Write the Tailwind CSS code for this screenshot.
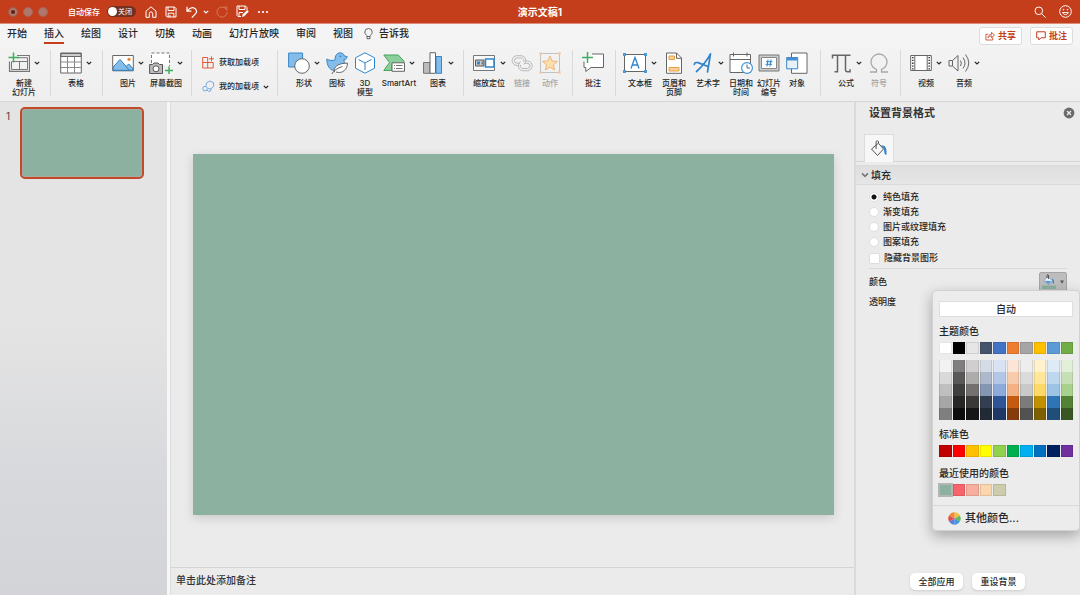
<!DOCTYPE html>
<html lang="zh-CN">
<head>
<meta charset="utf-8">
<title>演示文稿1</title>
<script src="https://cdn.jsdelivr.net/npm/@tailwindcss/browser@4"></script>
</head>
<body class="flex min-h-screen flex-col bg-[#ebebeb] font-['Inter','Noto_Sans_CJK_SC',sans-serif] text-[#262626]">

<svg class="hidden" aria-hidden="true">
  <symbol id="chev" viewBox="0 0 6 6"><path d="M.8 1.800l2.200 2.200 2.200-2.200" fill="none" stroke="currentColor" stroke-width="1.200"/></symbol>
</svg>

<!-- Title bar -->
<header class="grid h-6 shrink-0 grid-cols-[1fr_auto_1fr] items-center border-b border-[#dd8d79] bg-[#c43e1c] text-white">
  <div class="flex items-center pl-2">
    <div class="flex gap-[5px]">
      <button aria-label="关闭" class="flex size-[10px] items-center justify-center rounded-full border border-[#9b5f50] bg-[#b0766a]"><span class="size-1 rounded-full bg-[#5a2315]"></span></button>
      <button aria-label="最小化" class="size-[10px] rounded-full border border-[#a5675a] bg-[#b0766a]"></button>
      <button aria-label="缩放" class="size-[10px] rounded-full border border-[#a5675a] bg-[#b0766a]"></button>
    </div>
    <label for="autosave" class="ml-5 text-[8px] leading-3 font-medium">自动保存</label>
    <span class="relative ml-[7px] flex h-[11px] w-[29px] items-center justify-end rounded-full bg-[#73301f] pr-[4px] text-[7px] leading-none">
      <input id="autosave" type="checkbox" role="switch" class="absolute top-[1px] left-[1px] size-[9px] appearance-none rounded-full bg-white">关闭
    </span>
    <div class="ml-[9px] flex items-center">
      <button aria-label="主页"><svg class="size-3" viewBox="0 0 12 12" fill="none" stroke="#fff"><path d="M1 5.200L6 .8l5 4.400v6.100H7.700V7.600a1.700 1.700 0 0 0-3.400 0v3.700H1z" stroke-linejoin="round"/></svg></button>
      <button aria-label="保存" class="ml-2"><svg class="size-3" viewBox="0 0 12 12" fill="none" stroke="#fff"><path d="M1 1h8.500L11 2.500V11H2.200L1 9.800zM3 1v3.500h6V1M3.200 11V7.200h5.600V11M5 9v2"/></svg></button>
      <button aria-label="撤消" class="ml-[9px]"><svg class="size-3" viewBox="0 0 12 12" fill="none" stroke="#fff" stroke-width="1.200"><path d="M1 .8v4.400h4.400M1.200 5C3.500 2 6.200 1 8.600 2.300c2.100 1.200 2.500 3.700 1 5.400L5.800 11.600"/></svg></button>
      <button aria-label="撤消选项" class="ml-[5px]"><svg class="size-[6px]"><use href="#chev"/></svg></button>
      <button aria-label="重做" class="ml-[7px]"><svg class="size-3" viewBox="0 0 12 12" fill="none" stroke="#dc7c65"><path d="M8 1.500A5 5 0 1 0 11 6M7.500 1.200l3.400-.2v3.400" stroke-width=".9"/><path d="M10.600 4A5 5 0 0 0 8 1.500"/></svg></button>
      <button aria-label="另存为" class="ml-2"><svg class="size-[13px]" viewBox="0 0 13 13" fill="none" stroke="#fff"><path d="M5 11.500H2L1 10.500V1h8.500L11 2.500V5M3 1v3.500h6V1M3 11.500V7.500h4"/><path d="M6 12l.6-2.400 4.600-4.600 1.600 1.600-4.600 4.600z" fill="#fff" stroke="none"/></svg></button>
      <button aria-label="更多" class="ml-2"><svg class="h-3 w-3" viewBox="0 0 12 12" fill="#fff"><circle cx="2" cy="6" r="1.100"/><circle cx="6" cy="6" r="1.100"/><circle cx="10" cy="6" r="1.100"/></svg></button>
    </div>
  </div>
  <h1 class="text-[10px] leading-4 font-bold">演示文稿1</h1>
  <div class="flex items-center justify-end gap-[13px] pr-2">
    <button aria-label="搜索"><svg class="size-3" viewBox="0 0 12 12" fill="none" stroke="#fff"><circle cx="4.800" cy="4.800" r="3.800"/><path d="M7.600 7.600l4 4"/></svg></button>
    <button aria-label="反馈"><svg class="size-[13px]" viewBox="0 0 13 13" fill="none" stroke="#fff"><circle cx="6.500" cy="6.500" r="5.800"/><path d="M3.500 7.500a3.200 3.200 0 0 0 6 0z" stroke-width=".9"/><circle cx="4.500" cy="4.700" r=".4"/><circle cx="8.500" cy="4.700" r=".4"/></svg></button>
  </div>
</header>

<!-- Ribbon tabs -->
<nav class="flex h-[22px] shrink-0 items-start justify-between bg-[#f4f4f4] pr-[7px] pl-[7px]">
  <div class="flex gap-[17px] text-[10px] leading-[15px] font-medium [&>button]:border-b-2 [&>button]:border-transparent [&>button]:pt-[2px] [&>button]:pb-[1px] [&>button[aria-current]]:border-[#c43e1c]">
    <button>开始</button>
    <button aria-current="page">插入</button>
    <button>绘图</button>
    <button>设计</button>
    <button>切换</button>
    <button>动画</button>
    <button>幻灯片放映</button>
    <button>审阅</button>
    <button>视图</button>
    <button class="-ml-[6px] flex items-center gap-[6px]"><svg class="h-3 w-[9px]" viewBox="0 0 9 12" fill="none" stroke="#555" stroke-width=".9"><path d="M3 8.500C3 7 .8 6.300 .8 4.200a3.700 3.700 0 0 1 7.400 0C8.200 6.300 6 7 6 8.500zM3 8.500v2.200h3V8.500"/></svg>告诉我</button>
  </div>
  <div class="flex gap-2 pt-[3px] text-[9px] leading-[16px] font-bold text-[#c43e1c]">
    <button class="flex items-center gap-[3px] rounded-[3px] border border-[#dcdcdc] bg-white px-[5px]"><svg class="h-[10px] w-[10px]" viewBox="0 0 11 10" fill="none" stroke="#c43e1c" stroke-width=".9"><path d="M3.500 3H1v6.400h7.500V6.500M3.300 7C3.500 4.500 5 3.300 7.200 3.200V1l3.200 3-3.200 2.800V4.900C5.500 4.800 4.300 5.500 3.300 7z"/></svg>共享</button>
    <button class="flex items-center gap-[3px] rounded-[3px] border border-[#dcdcdc] bg-white px-[5px]"><svg class="h-[10px] w-[10px]" viewBox="0 0 10 10" fill="none" stroke="#c43e1c"><path d="M.7 .8h8.600v6H5L2.800 9V6.800H.7z"/></svg>批注</button>
  </div>
</nav>

<!-- Ribbon commands -->
<section aria-label="插入" class="flex h-14 shrink-0 items-start border-b border-[#d6d6d6] bg-linear-to-b from-[#f3f3f3] to-[#eeeeee] pt-1 text-[8px] leading-[9px] font-medium [&_.g]:flex [&_.g]:h-[46px] [&_.g]:shrink-0 [&_.g]:items-start [&_.g]:gap-[6px] [&_.g:not(:last-child)]:border-r [&_.g]:border-[#d9d9d9] [&_.g]:pt-[2px] [&_.g>button]:flex [&_.g>button]:shrink-0 [&_.g>button]:flex-col [&_.g>button]:items-center [&_.g>button]:gap-[5px] [&_.g>button]:whitespace-nowrap [&_.i]:flex [&_.i]:items-center [&_.i]:gap-1">
  <div class="g w-[51px] pl-2">
    <button class="w-8"><span class="i"><svg class="size-[22px]" viewBox="0 0 22 22" fill="none" stroke="#777"><path d="M9 3.500h12.500v15.800H1.500V9.500" stroke-width="1.200"/><path d="M9 5.700h10.500M3.500 10v7.500h16V5.700M3.500 9.500h16M11.500 9.500v8" fill="none"/><path d="M5.500 .5v10M.5 5.500h10.500" stroke="#3fae5f" stroke-width="1.500"/></svg><svg class="size-[6px]"><use href="#chev"/></svg></span><span>新建<br>幻灯片</span></button>
  </div>
  <div class="g w-[52px] pl-[9px]">
    <button class="w-8"><span class="i"><svg class="size-[22px]" viewBox="0 0 22 22" fill="none" stroke="#666"><path d="M.7 1h20.600v20H.7z" fill="#fff"/><path d="M1 1.500h20v3H1z" fill="#ccc"/><path d="M1 10h20M1 15.500h20M7.500 4.500V21M14.500 4.500V21" stroke="#888"/></svg><svg class="size-[6px]"><use href="#chev"/></svg></span>表格</button>
  </div>
  <div class="g w-[89px] pl-[9px]">
    <button class="w-8"><span class="i"><svg class="size-[22px]" viewBox="0 0 22 22"><path d="M.7 3.500h20.600v15.300H.7z" fill="#fff" stroke="#666"/><path d="M1.200 15L8 7.500l6.200 7 2.500-2.600 4 4.400v2H1.200z" fill="#84bdea" stroke="#2e7fc2"/><path d="M14 14.500l3.500 3.800" stroke="#2e7fc2"/><circle cx="17" cy="7.300" r="1.600" fill="#ed8733"/></svg><svg class="size-[6px]"><use href="#chev"/></svg></span>图片</button>
    <button class="w-8"><span class="i"><svg class="h-[22px] w-6" viewBox="0 0 24 22" fill="none"><path d="M2.500 11V1h18v13" stroke="#777" stroke-dasharray="3 2" fill="#fff"/><path d="M.6 12.500h3L5 11h4l1.500 1.500h3v9H.6z" fill="#bbb" stroke="#555"/><circle cx="7" cy="16.800" r="3" fill="#fff" stroke="#555"/><path d="M20 14.500v8M16 18.500h8" stroke="#3fae5f" stroke-width="1.500"/></svg><svg class="size-[6px]"><use href="#chev"/></svg></span>屏幕截图</button>
  </div>
  <div class="flex h-[46px] w-[86px] shrink-0 flex-col justify-between border-r border-[#d9d9d9] pt-[6px] pb-[3px] pl-[10px]">
    <button class="flex items-center gap-1"><svg class="size-[13px]" viewBox="0 0 13 13" fill="none" stroke="#e2593b"><path d="M.7 1.500h5v5h-5zM.7 6.500h5v5.500h-5zM5.700 6.500h5.500V12H5.700M9.500 .3v5M7 2.800h5"/></svg>获取加载项</button>
    <button class="flex items-center gap-1"><svg class="size-[13px]" viewBox="0 0 13 13" fill="none" stroke="#77a9dc"><path d="M3.800 5.800L4.800 2.600 8 1l3.400 1.700.4 3.600L9 8.800H6"/><circle cx="3" cy="8.600" r="2.300"/><path d="M5 10l1.500 1.500 2-.5.500-2"/></svg>我的加载项<svg class="size-[6px]"><use href="#chev"/></svg></button>
  </div>
  <div class="g w-[186px] pl-[10px]">
    <button class="w-8"><span class="i"><svg class="size-[22px]" viewBox="0 0 22 22"><path d="M.6 1h14v14H.6z" fill="#84bdea" stroke="#3a87c8"/><circle cx="14" cy="14" r="7.300" fill="#fff" stroke="#666"/></svg><svg class="size-[6px]"><use href="#chev"/></svg></span>形状</button>
    <button class="w-[22px]"><svg class="size-[22px]" viewBox="0 0 22 22"><path d="M.8 7c2.700 1.800 5.700 1.800 8.400 .8C8.800 3.800 11 .8 14.200 .8c2.500 0 3.900 1.500 4.100 3.300l2.900 .4c-.2 2-1.500 3.100-3.300 3.200C19.500 13 16.500 18.500 11 18.500H8C3.300 18 .8 13 .8 7z" fill="#84bdea" stroke="#3a87c8"/><circle cx="14.500" cy="4.200" r=".8" fill="#2e6fae"/><path d="M8.500 20.200c-1.500-5.200 3.500-9.200 13-9-.2 6.500-5 10.800-11.500 8.800" fill="#fff" stroke="#666"/><path d="M5.500 22.500c2-4 6-6.500 11-8" fill="none" stroke="#666"/></svg>图标</button>
    <button class="w-[22px]"><svg class="size-[22px]" viewBox="0 0 22 22" fill="#fff" stroke="#2f85cc" stroke-linejoin="round"><path d="M11 .8l9.500 5v10.400l-9.500 5-9.500-5V5.800z"/><path d="M4.500 7.500L11 11l6.500-3.500M11 11v7" fill="none"/></svg><span>3D<br>模型</span></button>
    <button class="w-[34px]"><span class="i"><svg class="size-[22px]" viewBox="0 0 22 22"><path d="M.8 3h14.500l6 6.500-2.800 3H9v6H.8L6.500 10.500z" fill="#8bcf9b" stroke="#43a45c"/><path d="M9 10.800h12.500v8.500H9z" fill="#fff" stroke="#666"/><path d="M11 13.500h1M13 13.500h6.500M11 16.500h1M13 16.500h6.500" stroke="#777"/></svg><svg class="size-[6px]"><use href="#chev"/></svg></span>SmartArt</button>
    <button class="w-8"><span class="i"><svg class="size-[22px]" viewBox="0 0 22 22"><path d="M1.500 10.500H8v10.800H1.500z" fill="#bbb" stroke="#777"/><path d="M14 4.500h5.500v16.800H14z" fill="#84bdea" stroke="#3a87c8"/><path d="M8 .7h5.500v20.600H8z" fill="#fff" stroke="#666"/></svg><svg class="size-[6px]"><use href="#chev"/></svg></span>图表</button>
  </div>
  <div class="g w-[109px] pl-[9px]">
    <button class="w-8"><span class="i"><svg class="h-[22px] w-6" viewBox="0 0 24 22"><path d="M1.500 3.500h21v15h-21z" fill="#f8f8f8" stroke="#777"/><path d="M3.500 8h8.500v6H3.500z" fill="#ccc" stroke="#555"/><path d="M5 9.500h3v3H5z" fill="#3a87c8"/><path d="M9.500 9.500h2v3h-2z" fill="#777"/><path d="M13.500 7h8.500v8h-8.500z" fill="#fff" stroke="#2f85cc" stroke-width="1.500"/></svg><svg class="size-[6px]"><use href="#chev"/></svg></span>缩放定位</button>
    <button disabled class="w-[22px] text-[#a5a5a5]"><svg class="size-[22px]" viewBox="0 0 22 22" fill="none" stroke="#b9b9b9"><path d="M8.200 13.500H6A4.900 4.900 0 0 1 6 3.700h4.200a4.900 4.900 0 0 1 4.700 5M13.600 9H16.300a4.900 4.900 0 0 1 0 9.800H12a4.900 4.900 0 0 1-4.700-5"/><path d="M9 11.200H6a2.600 2.600 0 0 1 0-5.200h4.200a2.600 2.600 0 0 1 2.400 3.600M13 11.300h3.300a2.600 2.600 0 0 1 0 5.200H12a2.600 2.600 0 0 1-2.400-3.600"/><path d="M14.900 8.700q0 2.500-2.300 3.900M7.300 13.800q0-2.700 2.300-4.300" stroke-width=".8"/></svg>链接</button>
    <button disabled class="w-[22px] text-[#a5a5a5]"><svg class="size-[22px]" viewBox="0 0 22 22"><path d="M1.500 1.500h19v19h-19z" fill="none" stroke="#c2c2c2"/><path d="M11 4l2.200 5 5.300.4-4.100 3.400 1.300 5.200L11 15.200 6.300 18l1.300-5.200L3.500 9.400 8.800 9z" fill="#fadfae" stroke="#efb678"/><path d="M.3 .3h2.500v2.500H.3zM19.200 .3h2.500v2.500h-2.500zM.3 19.200h2.500v2.500H.3zM19.200 19.200h2.500v2.500h-2.500z" fill="#f6c9a2"/></svg>动作</button>
  </div>
  <div class="g w-[43px] pl-[9px]">
    <button class="w-[22px]"><svg class="size-[22px]" viewBox="0 0 22 22" fill="none"><path d="M10 2h11.500v13.500H9L3.800 19.500v-4H2V9.500" fill="#fff" stroke="#666"/><path d="M5.500 0v11M0 5.500h11" stroke="#3fae5f" stroke-width="1.500"/></svg>批注</button>
  </div>
  <div class="g w-[205px] pl-2">
    <button class="w-8"><span class="i"><svg class="h-[22px] w-6" viewBox="0 0 24 22"><path d="M1.500 2.500h21v17h-21z" fill="#fff" stroke="#666"/><path d="M8 16.500L12 5.500l4 11M9.500 13h5" fill="none" stroke="#2f85cc" stroke-width="1.300"/><path d="M0 1h3v3H0zM21 1h3v3h-3zM0 18h3v3H0zM21 18h3v3h-3z" fill="#4a9bd8"/></svg><svg class="size-[6px]"><use href="#chev"/></svg></span>文本框</button>
    <button class="w-6"><svg class="size-[22px]" viewBox="0 0 22 22"><path d="M3.500 1h10l5 5v15.300h-15z" fill="#fff" stroke="#666"/><path d="M13.500 1v5.300h5" fill="none" stroke="#666"/><path d="M6 4h5.500v3.500H6zM6 15.500h10v3.500H6z" fill="#fbd19b" stroke="#ea9d45"/></svg><span>页眉和<br>页脚</span></button>
    <button class="w-8"><span class="i"><svg class="size-[22px]" viewBox="0 0 22 22" fill="none" stroke="#2f85cc" stroke-width="1.700" stroke-linecap="round" stroke-linejoin="round"><path d="M4.500 19.500Q13 12 18.500 1.800L15.500 20M2.300 12.500Q2.500 10 6 10.600L16 14.500"/></svg><svg class="size-[6px]"><use href="#chev"/></svg></span>艺术字</button>
    <button class="w-[22px]"><svg class="h-[22px] w-6" viewBox="0 0 24 22"><path d="M1 2.500h20.500v18H1z" fill="#fff" stroke="#666"/><path d="M1 7.500h20.500M4.500 .5v4M18 .5v4" stroke="#666"/><circle cx="18" cy="16" r="5.400" fill="#fff" stroke="#3f93d6" stroke-width="1.200"/><path d="M18 12.500V16h3" fill="none" stroke="#3a6c96"/></svg><span>日期和<br>时间</span></button>
    <button class="w-[22px]"><svg class="size-[22px]" viewBox="0 0 22 22" fill="none"><path d="M1 3h20v16H1z" fill="#ccc" stroke="#777"/><path d="M3.500 5.500h15v11h-15z" fill="#fff" stroke="#888"/><path d="M10 7.500l-1 7M13 7.500l-1 7M8 9.700h6.500M7.500 12.300H14" stroke="#2f85cc"/></svg><span>幻灯片<br>编号</span></button>
    <button class="w-[22px]"><svg class="size-[22px]" viewBox="0 0 22 22"><path d="M5.500 1h15.500v20.300H5.500z" fill="#fff" stroke="#666"/><path d="M.7 5.500h11v11.300H.7z" fill="#e7f1fa" stroke="#3a87c8"/><path d="M1 5.500h10.500v3H1z" fill="#4a90d0"/></svg>对象</button>
  </div>
  <div class="g w-[80px] pl-[9px]">
    <button class="w-8"><span class="i"><svg class="size-[22px]" viewBox="0 0 22 22" fill="none" stroke="#666" stroke-width="1.500"><path d="M2.500 6.500V3.200h18M7.500 3.200v16.500H4.500M15.500 3.200v14.500q0 2 2 2h2.500v-2.500"/></svg><svg class="size-[6px]"><use href="#chev"/></svg></span>公式</button>
    <button disabled class="w-[22px] text-[#a5a5a5]"><svg class="size-[22px]" viewBox="0 0 22 22" fill="none" stroke="#a8a8a8" stroke-width="1.300"><path d="M2 20h6.500v-2.500C4.500 15.500 3 13 3 10a8 8 0 0 1 16 0c0 3-1.500 5.500-5.500 7.500V20H20"/></svg>符号</button>
  </div>
  <div class="g w-[90px] pl-[9px]">
    <button class="w-8"><span class="i"><svg class="size-[22px]" viewBox="0 0 22 22"><path d="M.7 3.500h20.600v15H.7z" fill="#fff" stroke="#666"/><path d="M4.800 3.500v15M17.200 3.500v15" stroke="#666"/><path d="M2.800 5v13M19.200 5v13" stroke="#444" stroke-width="1.600" stroke-dasharray="1.300 1.500"/></svg><svg class="size-[6px]"><use href="#chev"/></svg></span>视频</button>
    <button class="w-8"><span class="i"><svg class="size-[22px]" viewBox="0 0 22 22" fill="none" stroke="#666"><path d="M1 8.500h3.500L10 3.500v15.500l-5.500-5H1zM4.500 8.500v5.500M12.500 8.500q1.700 2.700 0 5.500M15 5.500q4 5.500 0 11M17.500 2.500q6.500 8.500 0 17"/></svg><svg class="size-[6px]"><use href="#chev"/></svg></span>音频</button>
  </div>
</section>

<main class="flex flex-1">
  <!-- Slide thumbnails -->
  <aside class="flex w-[167px] shrink-0 items-start bg-linear-to-b from-[#e4e4e4] from-45% via-[#d8d9dc] via-75% to-[#d3d4d7] pt-[5px] pl-[6px]">
    <span class="w-[14px] pt-[3px] text-[10px] leading-3 text-[#444]">1</span>
    <button aria-label="幻灯片 1" class="h-[72px] w-[124px] rounded-[5px] border-2 border-[#c14a2a] bg-[#8cb1a1] outline-1 -outline-offset-3 outline-[#a9aaa0]"></button>
  </aside>
  <div class="w-1 shrink-0 border-r border-[#dcdcdc] bg-[#f7f7f7]"></div>

  <!-- Slide canvas and notes -->
  <section class="flex min-w-0 flex-1 flex-col">
    <div class="flex flex-1 items-center pr-5 pl-[22px]">
      <div class="aspect-video w-full bg-[#8cb1a1] shadow-[0_3px_10px_rgba(0,0,0,0.14)]"></div>
    </div>
    <textarea aria-label="备注" rows="1" placeholder="单击此处添加备注" class="block h-7 resize-none border-t border-[#d4d4d4] bg-transparent px-[5px] pt-[5px] text-[10px] leading-[14px] font-medium placeholder:text-[#333]"></textarea>
  </section>

  <!-- Background format pane -->
  <aside class="relative flex w-[226px] shrink-0 flex-col border-l-2 border-[#dadada] text-[9px] leading-3">
    <div class="flex items-center justify-between pt-[3px] pr-[5px] pl-[13px]">
      <h2 class="text-[11px] leading-4 font-bold text-[#333]">设置背景格式</h2>
      <button aria-label="关闭窗格"><svg class="size-3" viewBox="0 0 12 12"><circle cx="6" cy="6" r="5.400" fill="#6b6b6b"/><path d="M4 4l4 4M8 4l-4 4" stroke="#eee" stroke-width="1.200"/></svg></button>
    </div>
    <div class="mt-[13px] border-b border-[#d5d5d5] pl-2">
      <button aria-label="填充" class="-mb-px flex h-7 w-[30px] items-center justify-center border border-b-0 border-[#dcdcdc] bg-[#f7f7f7]"><svg class="size-[18px]" viewBox="0 0 18 18" fill="none"><path d="M8 3.500L1.500 9l6 6.500L13.500 9 8.500 3.300V1.500q-1.200-1.500-2.400 0V9" stroke="#555"/><path d="M11 5.500c4-.5 6 1.500 5.500 9.500-2 0-2.500-3-2.500-6z" fill="#3a87c8"/></svg></button>
    </div>
    <button class="mt-[3px] flex h-[20px] items-center gap-[2px] border-y border-[#dadada] bg-linear-to-b from-[#dedede] to-[#e6e6e6] pl-[5px] text-[10px] leading-4 font-medium"><svg class="size-2 text-[#777]"><use href="#chev"/></svg>填充</button>
    <form class="flex flex-col px-[13px] pt-[6px] font-medium">
      <div class="flex h-[57px] flex-col justify-between [&_input]:size-[10px] [&_input]:appearance-none [&_input]:rounded-full [&_input]:border [&_input]:border-[#dedede] [&_input]:bg-white [&>label]:flex [&>label]:h-3 [&>label]:items-center [&>label]:gap-1">
        <label><input type="radio" name="fill" checked class="checked:bg-[radial-gradient(circle,#111_0_2px,#fff_3px)]">纯色填充</label>
        <label><input type="radio" name="fill">渐变填充</label>
        <label><input type="radio" name="fill">图片或纹理填充</label>
        <label><input type="radio" name="fill">图案填充</label>
      </div>
      <label class="mt-[4px] flex h-3 items-center gap-1"><input type="checkbox" class="size-[11px] appearance-none rounded-[2px] border border-[#dedede] bg-white">隐藏背景图形</label>
      <div class="mt-[4px] flex items-center justify-between border-t border-[#dadada] pt-[3px]">
        <span>颜色</span>
        <button type="button" aria-label="颜色" class="flex h-[19px] w-7 items-center justify-center gap-1 rounded-[2px] border border-[#a5a5a5] bg-[#bdbdbd]">
          <svg class="h-[15px] w-[14px]" viewBox="0 0 14 15"><path d="M6 2.500l5 5-4.500 3L2 6.500z" fill="#eef4fa" stroke="#6b8fb5" stroke-width=".7"/><path d="M2.500 6.700L10 7l-3.500 3z" fill="#5b9be0"/><path d="M6.500 5V1.300q-1-1-1.500 0V4" fill="none" stroke="#333" stroke-width=".8"/><path d="M10 4.500q2.500 1 2 5.500-1.500-1-2-5.500z" fill="#3a7fd0"/><path d="M0 11.500h14v3.500H0z" fill="#8cb1a1"/></svg>
          <svg class="h-1 w-1" viewBox="0 0 4 4"><path d="M0 .5h4L2 3.800z" fill="#555"/></svg>
        </button>
      </div>
      <span class="mt-[5px]">透明度</span>
    </form>

    <div class="mt-auto flex gap-[9px] pb-[5px] pl-[54px] font-medium">
      <button class="h-[17px] w-[53px] rounded-[5px] bg-white shadow-sm">全部应用</button>
      <button class="h-[17px] w-[53px] rounded-[5px] bg-white shadow-sm">重设背景</button>
    </div>

    <!-- Colour picker pop-up -->
    <div class="absolute top-[188px] right-0 flex w-[148px] flex-col rounded-[4px] border border-[#d2d2d2] bg-[#ececec] text-[10px] leading-[14px] font-medium shadow-[0_5px_14px_rgba(0,0,0,0.3)]">
      <div class="flex flex-col px-[6px] pt-[10px]">
        <button class="h-4 border border-[#dedede] bg-white leading-[14px]">自动</button>
        <h3 class="mt-[7px]">主题颜色</h3>
        <div id="theme" class="mt-[4px] grid grid-cols-10 gap-x-[1px]"></div>
        <div id="shades" class="mt-[6px] grid grid-cols-10 gap-x-[1px]"></div>
        <h3 class="mt-[7px]">标准色</h3>
        <div id="standard" class="mt-[4px] grid grid-cols-10 gap-x-[1px]"></div>
        <h3 class="mt-[9px]">最近使用的颜色</h3>
        <div id="recent" class="mt-[4px] grid grid-cols-10 gap-x-[1px] [&>:first-child]:outline-2 [&>:first-child]:-outline-offset-1 [&>:first-child]:outline-[#b5b5b5]"></div>
      </div>
      <button class="mt-[9px] flex h-[25px] items-center gap-1 border-t border-[#d9d9d9] pl-[15px] text-[11px]">
        <svg class="size-[13px]" viewBox="0 0 13 13"><g transform="translate(6.500 6.500)"><path d="M0 0V-6.200A6.200 6.200 0 0 1 5.370-3.100z" fill="#f6c244"/><path d="M0 0L5.370-3.100A6.200 6.200 0 0 1 5.370 3.100z" fill="#69b95a"/><path d="M0 0L5.370 3.100A6.200 6.200 0 0 1 0 6.200z" fill="#3f9bd8"/><path d="M0 0V6.200A6.200 6.200 0 0 1-5.370 3.100z" fill="#5a7fe0"/><path d="M0 0L-5.370 3.100A6.200 6.200 0 0 1-5.370-3.100z" fill="#e5484d"/><path d="M0 0L-5.370-3.100A6.200 6.200 0 0 1 0-6.200z" fill="#f08a3c"/></g></svg>其他颜色...</button>
    </div>
  </aside>
</main>

<script>
  const palettes = {
    theme: 'ffffff 000000 e7e6e6 44546a 4472c4 ed7d31 a5a5a5 ffc000 5b9bd5 70ad47',
    shades: 'f2f2f2 7f7f7f d0cece d6dce5 d9e2f3 fbe5d6 ededed fff2cc deebf7 e2f0d9 ' +
            'd9d9d9 595959 aeabab adb9ca b4c6e7 f8cbad dbdbdb ffe699 bdd7ee c5e0b4 ' +
            'bfbfbf 3f3f3f 757070 8497b0 8eaadb f4b183 c9c9c9 ffd966 9dc3e6 a9d18e ' +
            'a6a6a6 262626 3b3838 333f50 2f5597 c55a11 7b7b7b bf9000 2e75b6 548235 ' +
            '7f7f7f 0d0d0d 171616 222a35 203864 843c0c 525252 7f6000 1f4e79 385723',
    standard: 'c00000 ff0000 ffc000 ffff00 92d050 00b050 00b0f0 0070c0 002060 7030a0',
    recent: '8cb1a1 f8646c f8ae9d fad5ae cdccac'
  };
  for (const [id, list] of Object.entries(palettes)) {
    for (const hex of list.split(' ')) {
      const b = document.createElement('button');
      b.className = id === 'shades' ? 'h-3 border-x border-black/10' : 'h-3 border border-black/10';
      b.style.backgroundColor = '#' + hex;
      b.setAttribute('aria-label', '#' + hex);
      document.getElementById(id).append(b);
    }
  }
</script>
</body>
</html>
